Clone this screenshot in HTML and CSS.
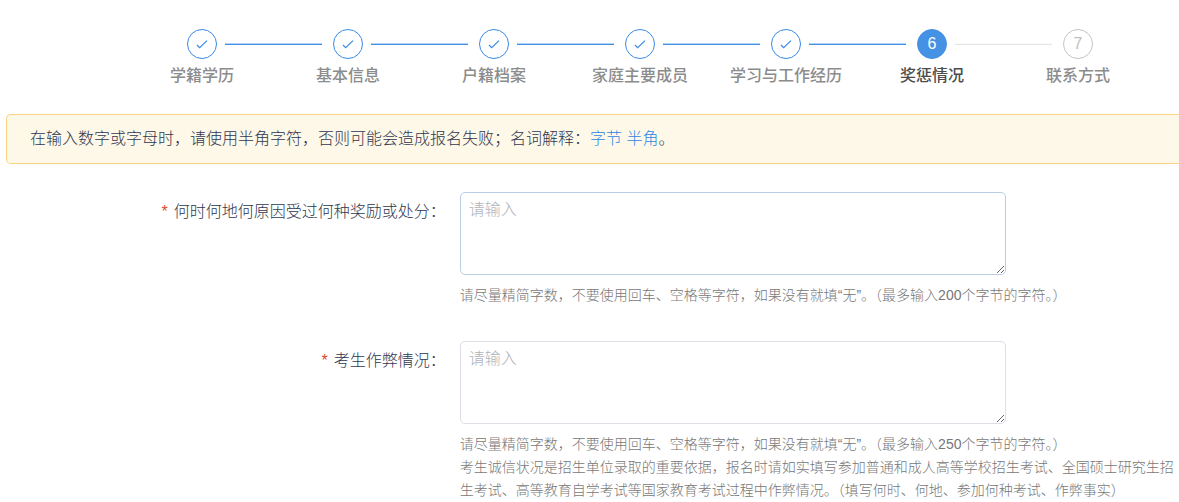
FILE: index.html
```html
<!DOCTYPE html>
<html lang="zh-CN">
<head>
<meta charset="utf-8">
<title>奖惩情况</title>
<link rel="stylesheet" href="styles.css">
</head>
<body>
<ol class="steps">
  <li class="step done"><span class="dot"><svg class="check" viewBox="0 0 14 12"><path d="M2 7 4.7 9.7 12 2.6"/></svg></span><span class="name">学籍学历</span></li>
  <li class="step done"><span class="dot"><svg class="check" viewBox="0 0 14 12"><path d="M2 7 4.7 9.7 12 2.6"/></svg></span><span class="name">基本信息</span></li>
  <li class="step done"><span class="dot"><svg class="check" viewBox="0 0 14 12"><path d="M2 7 4.7 9.7 12 2.6"/></svg></span><span class="name">户籍档案</span></li>
  <li class="step done"><span class="dot"><svg class="check" viewBox="0 0 14 12"><path d="M2 7 4.7 9.7 12 2.6"/></svg></span><span class="name">家庭主要成员</span></li>
  <li class="step done"><span class="dot"><svg class="check" viewBox="0 0 14 12"><path d="M2 7 4.7 9.7 12 2.6"/></svg></span><span class="name">学习与工作经历</span></li>
  <li class="step current" aria-current="step"><span class="dot">6</span><span class="name">奖惩情况</span></li>
  <li class="step"><span class="dot">7</span><span class="name">联系方式</span></li>
</ol>

<p class="notice">在输入数字或字母时，请使用半角字符，否则可能会造成报名失败；名词解释：<a href="#byte">字节</a> <a href="#half">半角</a>。</p>

<form class="form">
  <div class="field">
    <label class="label" for="awards"><span class="required">*</span>何时何地何原因受过何种奖励或处分：</label>
    <div class="control">
      <textarea class="input active" id="awards" placeholder="请输入"></textarea>
      <p class="help">请尽量精简字数，不要使用回车、空格等字符，如果没有就填“无”。（最多输入200个字节的字符。）</p>
    </div>
  </div>
  <div class="field">
    <label class="label" for="cheating"><span class="required">*</span>考生作弊情况：</label>
    <div class="control">
      <textarea class="input" id="cheating" placeholder="请输入"></textarea>
      <p class="help">请尽量精简字数，不要使用回车、空格等字符，如果没有就填“无”。（最多输入250个字节的字符。）<br>考生诚信状况是招生单位录取的重要依据，报名时请如实填写参加普通和成人高等学校招生考试、全国硕士研究生招生考试、高等教育自学考试等国家教育考试过程中作弊情况。（填写何时、何地、参加何种考试、作弊事实）</p>
    </div>
  </div>
</form>
</body>
</html>
```
FILE: styles.css
```css
*,
*::before,
*::after {
  box-sizing: border-box;
}

body {
  margin: 0;
  background: #fff;
  color: #2f3750;
  font: 300 16px/24px "Liberation Sans", "Noto Sans CJK SC", sans-serif;
}

.steps {
  display: flex;
  margin: 0;
  padding: 29px 28px 0 129px;
  list-style: none;
}

.step {
  flex: 1;
  display: grid;
  grid-template-columns: 1fr 30px 1fr;
  align-items: center;
  row-gap: 5px;
  color: #8c8c8c;
}

.step::before,
.step::after {
  content: "";
  height: 2px;
  border-top: 1px solid #b5d4f6;
  background: #3f8ee4;
}

.step::before {
  margin-right: 11px;
}

.step::after {
  grid-row: 1;
  grid-column: 3;
  margin-left: 8px;
}

.step:first-child::before,
.step:last-child::after {
  visibility: hidden;
}

.current::after,
.step:last-child::before {
  border-top-color: #fafafa;
  background: #e4e4e4;
}

.dot {
  display: grid;
  place-items: center;
  height: 30px;
  border: 1px solid #c4c4c4;
  border-radius: 50%;
  color: #c0c0c0;
}

.done .dot {
  border-color: #3a8ae6;
}

.current .dot {
  border-color: #4591e4;
  background: #4591e4;
  color: #fff;
}

.check {
  width: 14px;
  height: 12px;
  fill: none;
  stroke: #3a8ae6;
  stroke-width: 1.2;
}

.name {
  grid-column: 1 / -1;
  text-align: center;
  font-weight: 500;
  white-space: nowrap;
}

.current .name {
  color: #4c4c4c;
}

.notice {
  margin: 26px 0 28px 6px;
  padding: 12px 23px;
  border: 1px solid #f8d481;
  border-right: 0;
  border-radius: 5px 0 0 5px;
  background: #fef8e8;
}

.notice a {
  color: #2f86e4;
  text-decoration: none;
}

.field {
  display: grid;
  grid-template-columns: 39% 1fr;
}

.field + .field {
  margin-top: 34px;
}

.label {
  padding: 8px 14px 0 0;
  text-align: right;
}

.required {
  margin-right: 6px;
  color: #e0492f;
}

.input {
  display: block;
  width: 76%;
  height: 83px;
  padding: 5px 8px;
  border: 1px solid #dcdfe6;
  border-radius: 5px;
  outline: none;
  background: #fff;
  color: inherit;
  font: inherit;
  resize: vertical;
}

.input.active {
  border-color: #b9cde4;
}

.input::placeholder {
  color: #b0b4bc;
}

.help {
  margin: 9px 0 0;
  color: #777;
  font-size: 14px;
  line-height: 23px;
}
```
